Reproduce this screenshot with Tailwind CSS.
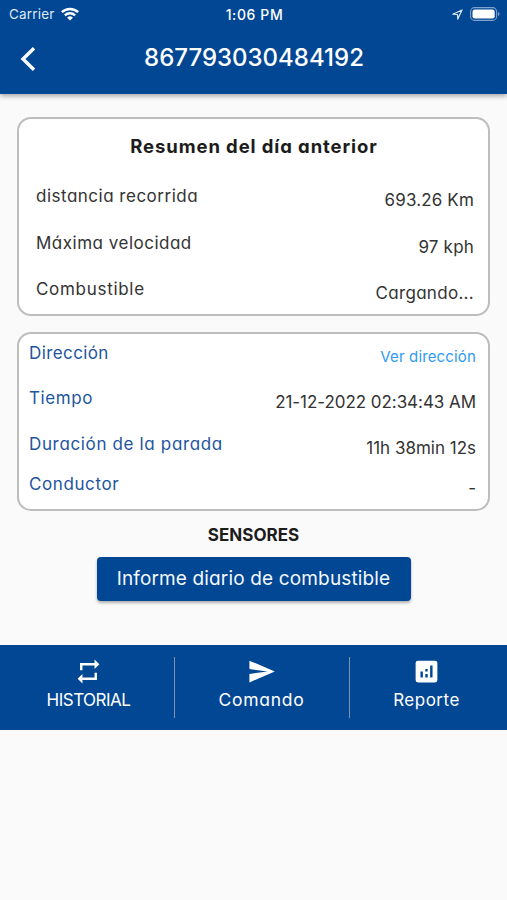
<!DOCTYPE html>
<html lang="es">
<head>
    <meta charset="UTF-8">
    <meta name="viewport" content="width=device-width, initial-scale=1.0">
    <title>867793030484192</title>
    <script src="https://cdn.jsdelivr.net/npm/@tailwindcss/browser@4"></script>
</head>
<body class="bg-[#fafafa] font-['Inter',sans-serif] [font-feature-settings:'cv11'] text-[#333] w-[507px] h-[900px] overflow-hidden whitespace-nowrap">
    <header class="h-[94px] bg-[#024794] text-white shadow-[0_2px_5px_rgba(0,0,0,0.35)]">
        <!-- Status bar -->
        <div class="h-7 pl-[9px] pr-[7px] grid grid-cols-3 items-center [font-feature-settings:normal]">
            <div class="flex items-center gap-1.5 text-[13.5px] tracking-[0.2px] text-[#dfe9f5]">
                <span>Carrier</span>
                <svg class="w-[18px] h-[14px]" viewBox="0 0 18 14" fill="none" stroke="#fff" stroke-width="2.5">
                    <path d="M.9 5.2a11.6 11.6 0 0 1 16.2 0M3.9 8.3a7.3 7.3 0 0 1 10.2 0"/>
                    <path d="M9 13.6 6.1 10.7a4.1 4.1 0 0 1 5.8 0z" fill="#fff" stroke="none"/>
                </svg>
            </div>
            <div class="text-center text-[14px] font-medium tracking-[0.6px]">1:06 PM</div>
            <div class="flex items-center justify-end gap-[7px]">
                <svg class="w-[11px] h-[11px]" viewBox="0 0 11 11" fill="none" stroke="#dfe9f5" stroke-width="1.2" stroke-linejoin="round"><path d="M10 1 .9 5.2l4.6.3.3 4.6z"/></svg>
                <svg class="w-[30px] h-[14px]" viewBox="0 0 30 14">
                    <rect x=".6" y=".6" width="26" height="12.8" rx="4" fill="none" stroke="#7fa3ca" stroke-width="1.1"/>
                    <rect x="2.5" y="2.4" width="22.2" height="9.2" rx="2.4" fill="#fff"/>
                    <path d="M28 4.8q3.2 2.2 0 4.4z" fill="#7fa3ca"/>
                </svg>
            </div>
        </div>
        <div class="h-[60px] flex items-center pl-5">
            <svg class="w-4 h-6 mt-0.5" viewBox="0 0 16 24" fill="none" stroke="#fff" stroke-width="3.4"><path d="M14 1.2 3 12l11 10.8"/></svg>
            <h1 class="flex-1 pr-[35px] text-center text-[24px] font-medium tracking-[0px]">867793030484192</h1>
        </div>
    </header>

    <main class="px-[17px] pt-[22.5px]">
        <section class="h-[199.5px] pt-[11px] pl-[17px] pr-3.5 bg-white border-2 border-[#bdbdbd] rounded-[14px]">
            <h2 class="h-8 leading-8 pr-0.5 text-center text-[18.5px] font-bold text-[#1c1c1c]"><span class="tracking-[0.9px]">Resumen del día anterior</span></h2>
            <div class="flex justify-between h-[46.5px] mt-[11.5px] text-[17px] leading-[46px]">
                <span class="tracking-[0.5px]">distancia recorrida</span>
                <span class="pt-1 tracking-[0.15px]">693.26 Km</span>
            </div>
            <div class="flex justify-between h-[46.5px] text-[17px] leading-[46px]">
                <span class="tracking-[0.5px]">Máxima velocidad</span>
                <span class="pt-1 tracking-[0.2px]">97 kph</span>
            </div>
            <div class="flex justify-between h-[46.5px] text-[17px] leading-[46px]">
                <span class="tracking-[0.7px]">Combustible</span>
                <span class="pt-1 tracking-[0.3px]">Cargando...</span>
            </div>
        </section>

        <section class="h-[179px] mt-[15.5px] pl-2.5 pr-3 bg-white border-2 border-[#bdbdbd] rounded-[14px] text-[17px] leading-[38px]">
            <div class="flex justify-between h-[45px]">
                <span class="text-[#1e559e] tracking-[0.4px]">Dirección</span>
                <a href="#" class="pt-[3px] text-[15px] leading-[40px] text-[#2f9bf0] tracking-[0.15px]">Ver dirección</a>
            </div>
            <div class="flex justify-between h-[46.5px]">
                <span class="text-[#1e559e] tracking-[0.6px]">Tiempo</span>
                <span class="pt-1 tracking-[-0.05px]">21-12-2022 02:34:43 AM</span>
            </div>
            <div class="flex justify-between h-10">
                <span class="text-[#1e559e] tracking-[0.65px]">Duración de la parada</span>
                <span class="pt-1">11h 38min 12s</span>
            </div>
            <div class="flex justify-between h-10">
                <span class="text-[#1e559e] tracking-[0.6px]">Conductor</span>
                <span class="pt-1">-</span>
            </div>
        </section>

        <h3 class="mt-[12.5px] h-6 leading-6 text-center text-[17px] font-bold text-[#1c1c1c]"><span>SENSORES</span></h3>
        <button class="block w-[314px] h-11 mt-[10px] mx-auto rounded bg-[#024794] text-[19px] text-[#f4f8fd] text-center shadow-[0_2px_3px_rgba(0,0,0,0.3)]"><span class="tracking-[0.15px]">Informe diario de combustible</span></button>
    </main>

    <nav class="flex mt-11 h-[85px] py-3 bg-[#024794] text-[17px] text-white">
        <a href="#" class="w-[175px] pl-[3px] flex flex-col items-center border-r border-[#8093ae]">
            <svg class="w-[29px] h-[29px]" viewBox="0 0 24 24" fill="#fff"><path d="M7 7h10v3l4-4-4-4v3H5v6h2zm10 10H7v-3l-4 4 4 4v-3h12v-6h-2z"/></svg>
            <span class="leading-7 tracking-[-0.5px]">HISTORIAL</span>
        </a>
        <a href="#" class="w-[175px] pr-px flex flex-col items-center border-r border-[#8093ae]">
            <svg class="w-[29px] h-[29px]" viewBox="0 0 24 24" fill="#fff"><path d="M2.01 21 23 12 2.01 3 2 10l15 2-15 2z"/></svg>
            <span class="leading-7 text-[17.5px] tracking-[0.7px]">Comando</span>
        </a>
        <a href="#" class="w-[153px] flex flex-col items-center">
            <svg class="w-[29px] h-[29px]" viewBox="0 0 24 24" fill="#fff"><path d="M19 3H5a2 2 0 0 0-2 2v14a2 2 0 0 0 2 2h14a2 2 0 0 0 2-2V5a2 2 0 0 0-2-2zM9 17H7v-5h2zm4 0h-2v-3h2zm0-5h-2v-2h2zm4 5h-2V7h2z"/></svg>
            <span class="leading-7 tracking-[0.5px]">Reporte</span>
        </a>
    </nav>
</body>
</html>
